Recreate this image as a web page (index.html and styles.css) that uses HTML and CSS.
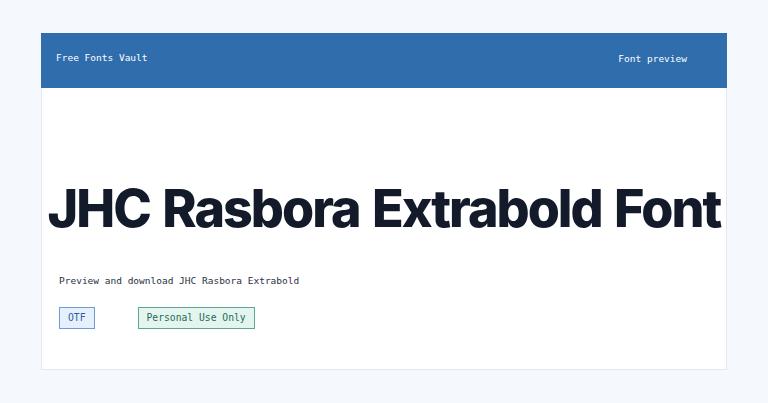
FILE: index.html
```html
<!DOCTYPE html>
<html lang="en">
<head>
    <meta charset="UTF-8">
    <meta name="viewport" content="width=device-width, initial-scale=1.0">
    <title>JHC Rasbora Extrabold Font</title>
    <link rel="stylesheet" href="styles.css">
</head>
<body>
    <div class="card">
        <header class="top-bar">
            <span class="brand">Free Fonts Vault</span>
            <span class="top-link">Font preview</span>
        </header>
        <main class="preview">
            <h1 class="font-name">JHC Rasbora Extrabold Font</h1>
            <p class="desc">Preview and download JHC Rasbora Extrabold</p>
            <div class="tags">
                <span class="tag tag-format">OTF</span>
                <span class="tag tag-license">Personal Use Only</span>
            </div>
        </main>
    </div>
</body>
</html>
```

FILE: styles.css
```css
body{
    margin: 0; background-color: #f5f9fe;
    font-family: "DejaVu Sans Mono", monospace;
}
.card{ /*가운데 카드*/
    width: 686px; height: 337px; box-sizing: border-box;
    margin: 33px auto 0;
    background-color: #fff; border: 1px solid #e3e8ef; border-top: 0;
}
.top-bar{
    display: flex; justify-content: space-between; align-items: center;
    height: 55px; margin: 0 -1px; padding: 0 40px 0 15px;
    background-color: #2f6dad; color: #fff; font-size: 9.5px;
}
.top-bar .brand{ margin-top: -7px; }
.top-bar .top-link{ margin-top: -5px; }
.preview{
    padding: 0 17px;
}
.font-name{
    margin: 88px -12px 0; text-align: center; white-space: nowrap;
    font-family: Inter, sans-serif; font-weight: 800; font-size: 52px;
    letter-spacing: -2px; word-spacing: 3px; line-height: 66px; color: #131b2b;
}
.desc{
    margin: 33px 0 0; font-size: 9.5px; color: #2a3242;
}
.tags{
    display: flex; gap: 43px; margin-top: 21px;
}
.tag{
    height: 22px; line-height: 20px; box-sizing: border-box; padding: 0 8px;
    font-size: 9.7px;
}
.tag-format{ background-color: #e6f0fc; border: 1px solid #6e9bd4; color: #2f5e9c; }
.tag-license{ background-color: #e4f5ef; border: 1px solid #5fa595; color: #1c6b58; }
```
